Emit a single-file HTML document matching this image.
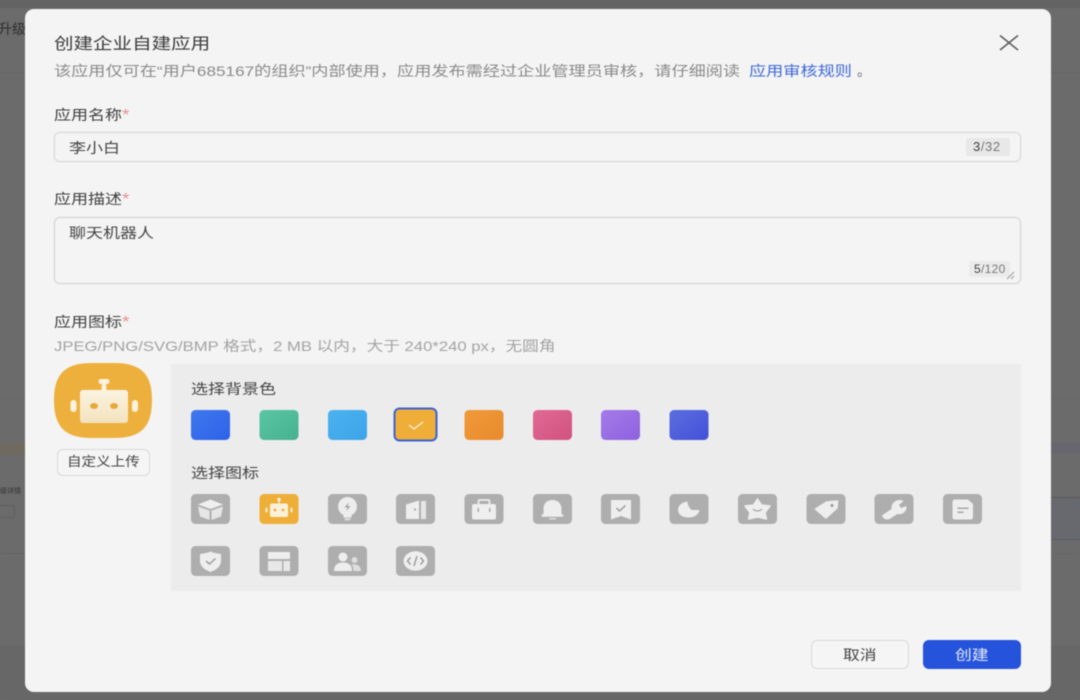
<!DOCTYPE html>
<html lang="zh-CN">
<head>
<meta charset="utf-8">
<title>创建企业自建应用</title>
<style>
html,body{margin:0;padding:0;width:1080px;height:700px;overflow:hidden;background:#6b6b6b}
#root{position:relative;width:1080px;height:700px;overflow:hidden;filter:blur(.55px);font-family:"Liberation Sans","Noto Sans CJK SC",sans-serif}
.b{position:absolute}
.t{position:absolute;white-space:nowrap;line-height:20px;height:20px;transform-origin:0 50%;color:#444}
.l{font-size:14px;transform:scaleX(1.215);color:#3f3f3f}
i{font-style:normal;color:#e58f8f;font-size:16px;line-height:0}
svg{position:absolute;left:0;top:0}
</style>
</head>
<body>
<div id="root">
<div class="b" style="left:0;top:0;width:1080px;height:8px;background:#636363"></div>
<div class="b" style="left:0;top:72px;width:1080px;height:1px;background:#676767"></div>
<div class="b" style="left:0;top:398px;width:1080px;height:1px;background:#686868"></div>
<div class="b" style="left:0;top:443px;width:25px;height:12px;background:#6f6a60"></div>
<div class="b" style="left:1051px;top:443px;width:29px;height:10px;background:#67666f"></div>
<div class="b" style="left:1051px;top:497px;width:29px;height:41px;background:#68696f;border-top:1px solid #5a5a60;border-bottom:1px solid #5c5a6c"></div>
<div class="b" style="left:-6px;top:505px;width:19px;height:11px;border:1px solid #606060;border-radius:3px"></div>
<div class="b" style="left:0;top:553px;width:25px;height:1px;background:#656565"></div>
<div class="b" style="left:1055px;top:553px;width:25px;height:1px;background:#676767"></div>
<div class="b" style="left:0;top:645px;width:1080px;height:55px;background:#676767"></div>
<div class="t" style="left:-2px;top:19px;font-size:14px;color:#2e2e2e">升级</div>
<div class="t" style="left:0;top:482px;font-size:7px;color:#333">级详情</div>

<div class="b" style="left:25px;top:9px;width:1026px;height:683px;background:#f4f4f4;border-radius:9px"></div>

<div class="t" style="left:54px;top:35px;font-size:16px;transform:scaleX(1.22);color:#3a3a3a">创建企业自建应用</div>
<div class="t" style="left:54px;top:61px;font-size:14px;transform:scaleX(1.225);color:#8a8a8a">该应用仅可在“用户685167的组织”内部使用，应用发布需经过企业管理员审核，请仔细阅读</div>
<div class="t" style="left:749px;top:61px;font-size:14px;transform:scaleX(1.225);color:#3f6ad8">应用审核规则</div>
<div class="t" style="left:857px;top:61px;font-size:14px;color:#666">。</div>

<div class="t l" style="left:54px;top:105px">应用名称<i>*</i></div>
<div class="b" style="left:54px;top:132px;width:965px;height:28px;border:1px solid #d8d8d8;border-radius:6px;box-shadow:0 0 0 .5px #e6e6e6"></div>
<div class="t l" style="left:69px;top:138px;color:#444">李小白</div>
<div class="b" style="left:966px;top:138px;width:44px;height:18px;background:#e8e8e8;border-radius:2px"></div>
<div class="t" style="left:973px;top:137px;font-size:13px;color:#777;letter-spacing:.6px"><b style="font-weight:400;color:#3f3f3f">3</b>/32</div>

<div class="t l" style="left:54px;top:189px">应用描述<i>*</i></div>
<div class="b" style="left:54px;top:217px;width:965px;height:65px;border:1px solid #d4d4d4;border-radius:6px;box-shadow:0 0 0 .5px #e6e6e6"></div>
<div class="t l" style="left:69px;top:223px;color:#444">聊天机器人</div>
<div class="b" style="left:969px;top:261px;width:41px;height:16px;background:#ebebeb;border-radius:2px"></div>
<div class="t" style="left:974px;top:259px;font-size:12px;color:#777;letter-spacing:.3px"><b style="font-weight:400;color:#444">5</b>/120</div>

<div class="t l" style="left:54px;top:312px">应用图标<i>*</i></div>
<div class="t" style="left:54px;top:336px;font-size:14px;transform:scaleX(1.19);color:#a3a3a3">JPEG/PNG/SVG/BMP 格式，2 MB 以内，大于 240*240 px，无圆角</div>

<div class="b" style="left:171px;top:364px;width:850px;height:227px;background:#ececec"></div>
<div class="b" style="left:57px;top:449px;width:91px;height:25px;border:1px solid #d9d9d9;border-radius:6px;background:#f5f5f5"></div>
<div class="b" style="left:811px;top:640px;width:96px;height:27px;border:1px solid #d9d9d9;border-radius:6px;background:#f5f5f5"></div>
<div class="b" style="left:923px;top:640px;width:98px;height:29px;background:#2653dc;border-radius:6px"></div>

<svg width="1080" height="700" viewBox="0 0 1080 700" xmlns="http://www.w3.org/2000/svg">
<defs>
<linearGradient id="bd" x1="0" y1="0" x2="0" y2="1"><stop offset="0" stop-color="#fbf4e3"/><stop offset="1" stop-color="#f3e2bd"/></linearGradient>
<linearGradient id="c1" x1="0" y1="0" x2="1" y2="1"><stop offset="0" stop-color="#3f78ee"/><stop offset="1" stop-color="#2d62e8"/></linearGradient>
<linearGradient id="c2" x1="0" y1="0" x2="1" y2="1"><stop offset="0" stop-color="#5bc6a4"/><stop offset="1" stop-color="#46b18f"/></linearGradient>
<linearGradient id="c3" x1="0" y1="0" x2="1" y2="1"><stop offset="0" stop-color="#4bb3ee"/><stop offset="1" stop-color="#3da3ea"/></linearGradient>
<linearGradient id="c5" x1="0" y1="0" x2="1" y2="1"><stop offset="0" stop-color="#f09a38"/><stop offset="1" stop-color="#e98a2e"/></linearGradient>
<linearGradient id="c6" x1="0" y1="0" x2="1" y2="1"><stop offset="0" stop-color="#df6a94"/><stop offset="1" stop-color="#d2527f"/></linearGradient>
<linearGradient id="c7" x1="0" y1="0" x2="1" y2="1"><stop offset="0" stop-color="#a47be8"/><stop offset="1" stop-color="#8e61e0"/></linearGradient>
<linearGradient id="c8" x1="0" y1="0" x2="1" y2="1"><stop offset="0" stop-color="#5b6ee0"/><stop offset="1" stop-color="#4450d8"/></linearGradient>
</defs>

<!-- close -->
<path d="M1000 35.500 L1018 50 M1018 35.500 L1000 50" stroke="#5a5a5a" stroke-width="1.500" fill="none"/>
<!-- textarea resize -->
<path d="M1007 279 L1014 272 M1011 279 L1014 276" stroke="#999" stroke-width="1" fill="none"/>

<!-- logo -->
<path d="M54 400 C54 373 66 363 92 363 L114 363 C140 363 152 373 152 400 C152 428 140 438 114 438 L92 438 C66 438 54 428 54 400Z" fill="#eeb03d"/>
<rect x="98.500" y="379" width="11" height="5" rx="2.500" fill="#fbf3df"/>
<path d="M102 383 L106 383 L106.500 390 L101.500 390Z" fill="#fbf3df"/>
<rect x="80" y="390" width="48" height="33" rx="3" fill="url(#bd)"/>
<ellipse cx="94" cy="406" rx="4" ry="3" fill="#e9a83a"/>
<ellipse cx="114" cy="406" rx="4" ry="3" fill="#e9a83a"/>
<rect x="70.500" y="400" width="6" height="12" rx="3" fill="#fbf3df"/>
<rect x="132" y="400" width="6" height="12" rx="3" fill="#fbf3df"/>

<!-- colors -->
<rect x="191" y="410" width="39" height="30" rx="4.500" fill="url(#c1)"/>
<rect x="259.500" y="410" width="39" height="30" rx="4.500" fill="url(#c2)"/>
<rect x="328" y="410" width="39" height="30" rx="4.500" fill="url(#c3)"/>
<rect x="394.500" y="408.500" width="42" height="32" rx="5" fill="#efae38" stroke="#3a62d6" stroke-width="2"/>
<path d="M409 425 L414 429 L423 422" stroke="#fdf6e6" stroke-width="1.200" fill="none"/>
<rect x="464.500" y="410" width="39" height="30" rx="4.500" fill="url(#c5)"/>
<rect x="533" y="410" width="39" height="30" rx="4.500" fill="url(#c6)"/>
<rect x="601" y="410" width="39" height="30" rx="4.500" fill="url(#c7)"/>
<rect x="669.500" y="410" width="39" height="30" rx="4.500" fill="url(#c8)"/>

<!-- icons row 1 -->
<g transform="translate(191,494)"><rect width="39" height="30" rx="4.500" fill="#aeaeae"/>
<path d="M19.500 5.500 L32 10.500 L19.500 15 L7 10.500Z" fill="#efefef"/><path d="M7 12.500 L18.500 16.500 L18.500 26 L9 22.500Z" fill="#e6e6e6"/><path d="M32 12.500 L20.500 16.500 L20.500 26 L30 22.500Z" fill="#e6e6e6"/></g>

<g transform="translate(259.500,494)"><rect width="39" height="30" rx="4.500" fill="#efae38"/>
<circle cx="19.500" cy="5.500" r="1.800" fill="#fbf1da"/><rect x="19" y="6" width="1.200" height="4" fill="#fbf1da"/>
<rect x="10.500" y="9.500" width="18" height="13.500" rx="2" fill="#fbf1da"/>
<circle cx="15.500" cy="16" r="1.300" fill="#ee9f3a"/><circle cx="23.500" cy="16" r="1.300" fill="#ee9f3a"/>
<rect x="6" y="13.500" width="2" height="5" rx="1" fill="#fbf1da"/><rect x="31" y="13.500" width="2" height="5" rx="1" fill="#fbf1da"/></g>

<g transform="translate(328,494)"><rect width="39" height="30" rx="4.500" fill="#aeaeae"/>
<circle cx="19.500" cy="12.500" r="9.500" fill="#ededed"/><rect x="15.500" y="20" width="8" height="3.500" fill="#ededed"/><rect x="16.500" y="24" width="6" height="2.500" rx="1" fill="#d9d9d9"/>
<path d="M21 8 L16.500 13.500 L19.500 13.500 L18 17.500 L22.500 12 L19.500 12Z" fill="#a5a5a5"/></g>

<g transform="translate(396,494)"><rect width="39" height="30" rx="4.500" fill="#aeaeae"/>
<path d="M10 10.500 L23 6.500 L23 25 L10 25Z" fill="#eeeeee"/><rect x="25" y="7" width="5" height="18" fill="#e6e6e6"/><circle cx="19" cy="15.500" r="1" fill="#999"/></g>

<g transform="translate(464.500,494)"><rect width="39" height="30" rx="4.500" fill="#aeaeae"/>
<rect x="7.500" y="10" width="24" height="15.500" rx="2" fill="#eeeeee"/><path d="M14 10 L14 7.500 C14 6.500 14.500 6 15.500 6 L23.500 6 C24.500 6 25 6.500 25 7.500 L25 10" stroke="#eeeeee" stroke-width="1.800" fill="none"/>
<rect x="13" y="14" width="1.500" height="4" fill="#aaa"/><rect x="24.500" y="14" width="1.500" height="4" fill="#aaa"/></g>

<g transform="translate(533,494)"><rect width="39" height="30" rx="4.500" fill="#aeaeae"/>
<path d="M9.500 21 C11 19.500 10.500 17.500 10.500 15 C10.500 9 14.500 6 19.500 6 C24.500 6 28.500 9 28.500 15 C28.500 17.500 28 19.500 29.500 21Z" fill="#eeeeee"/><rect x="8.500" y="20.500" width="22" height="2.200" rx="1" fill="#eeeeee"/><rect x="16" y="24" width="7" height="1.500" rx=".7" fill="#dedede"/></g>

<g transform="translate(601,494)"><rect width="39" height="30" rx="4.500" fill="#aeaeae"/>
<path d="M10 6 L30 6 L30 25.500 L20 22 L10 25.500Z" fill="#eeeeee"/><path d="M15.500 14 L18.500 17 L24.500 11.500" stroke="#9a9a9a" stroke-width="1.500" fill="none"/></g>

<g transform="translate(669.500,494)"><rect width="39" height="30" rx="4.500" fill="#aeaeae"/>
<path d="M18 7.500 C12 8 8.500 12 8.500 16 C8.500 20.500 13 23.500 19 23.500 C25 23.500 29 20.500 30 16 L22 16 C19.500 13.500 18 10.500 18 7.500Z" fill="#eeeeee"/></g>

<g transform="translate(738,494)"><rect width="39" height="30" rx="4.500" fill="#aeaeae"/>
<path d="M19.500 5 L23.500 11 L32 12 L27 18.500 L28.500 25 L19.500 23 L10.500 25 L12 18.500 L7 12 L15.500 11Z" fill="#eeeeee" stroke="#eeeeee" stroke-width="1.500" stroke-linejoin="round"/><path d="M15 15 C17 17.500 22 17.500 24 15" stroke="#a5a5a5" stroke-width="1.200" fill="none"/></g>

<g transform="translate(806.500,494)"><rect width="39" height="30" rx="4.500" fill="#aeaeae"/>
<path d="M9 15 L20 8 L31 7 L30.500 14 L19.500 24Z" fill="#eeeeee" stroke="#eeeeee" stroke-width="1.500" stroke-linejoin="round"/><circle cx="25.500" cy="11.500" r="1.500" fill="#999"/></g>

<g transform="translate(874.500,494)"><rect width="39" height="30" rx="4.500" fill="#aeaeae"/>
<path d="M8 21 L17 15 C16.500 10 20 6 25.500 6 C27 6 28 6.500 29 7 L24.500 11 L26.500 14 L32 12 C32.500 17.500 28 21 23 20 L15 25 C12 26.500 6.500 24 8 21Z" fill="#eeeeee"/></g>

<g transform="translate(943,494)"><rect width="39" height="30" rx="4.500" fill="#aeaeae"/>
<path d="M9.500 8 C9.500 6.500 10.500 5.500 12 5.500 L25 5.500 L30 10 L30 23 C30 24.500 29 25.500 27.500 25.500 L12 25.500 C10.500 25.500 9.500 24.500 9.500 23Z" fill="#eeeeee"/><rect x="14.500" y="13.500" width="11" height="1.500" fill="#a5a5a5"/><rect x="14.500" y="17.500" width="6" height="1.500" fill="#a5a5a5"/></g>

<!-- icons row 2 -->
<g transform="translate(191,546)"><rect width="39" height="30" rx="4.500" fill="#aeaeae"/>
<path d="M19.500 5.500 C23 7 26 7.500 30 8 L30 15 C30 20.500 25 24 19.500 26 C14 24 9 20.500 9 15 L9 8 C13 7.500 16 7 19.500 5.500Z" fill="#eeeeee"/><path d="M15 15 L18.500 18 L24.500 12.500" stroke="#9e9e9e" stroke-width="1.500" fill="none"/></g>

<g transform="translate(259.500,546)"><rect width="39" height="30" rx="4.500" fill="#aeaeae"/>
<rect x="8.500" y="6" width="22" height="7" fill="#eeeeee"/><rect x="8.500" y="15" width="14" height="10" fill="#e8e8e8"/><rect x="24" y="15" width="6.500" height="10" fill="#e8e8e8"/></g>

<g transform="translate(328,546)"><rect width="39" height="30" rx="4.500" fill="#aeaeae"/>
<circle cx="15" cy="11" r="4.500" fill="#eeeeee"/><path d="M6 25 C6 19 9.500 16.500 15 16.500 C20.500 16.500 24 19 24 25Z" fill="#eeeeee"/><circle cx="26.500" cy="14" r="3" fill="#dedede"/><path d="M25.500 25 C25.500 22 25 20 23.500 18.500 C29 17.500 33 20 33 25Z" fill="#dedede"/></g>

<g transform="translate(396,546)"><rect width="39" height="30" rx="4.500" fill="#aeaeae"/>
<ellipse cx="19.500" cy="15" rx="12" ry="9.800" fill="#eeeeee"/><path d="M14.500 11.500 L11.500 15 L14.500 18.500 M24.500 11.500 L27.500 15 L24.500 18.500 M21 10 L18 20" stroke="#9a9a9a" stroke-width="1.400" fill="none"/></g>
</svg>

<div class="t l" style="left:191px;top:379px;color:#444">选择背景色</div>
<div class="t l" style="left:191px;top:463px;color:#444">选择图标</div>
<div class="t" style="left:67px;top:452px;font-size:13px;transform:scaleX(1.12);color:#444">自定义上传</div>
<div class="t" style="left:843px;top:645px;font-size:14px;transform:scaleX(1.2);color:#444">取消</div>
<div class="t" style="left:955px;top:645px;font-size:14px;transform:scaleX(1.2);color:#e6ecfb">创建</div>
</div>
</body>
</html>
